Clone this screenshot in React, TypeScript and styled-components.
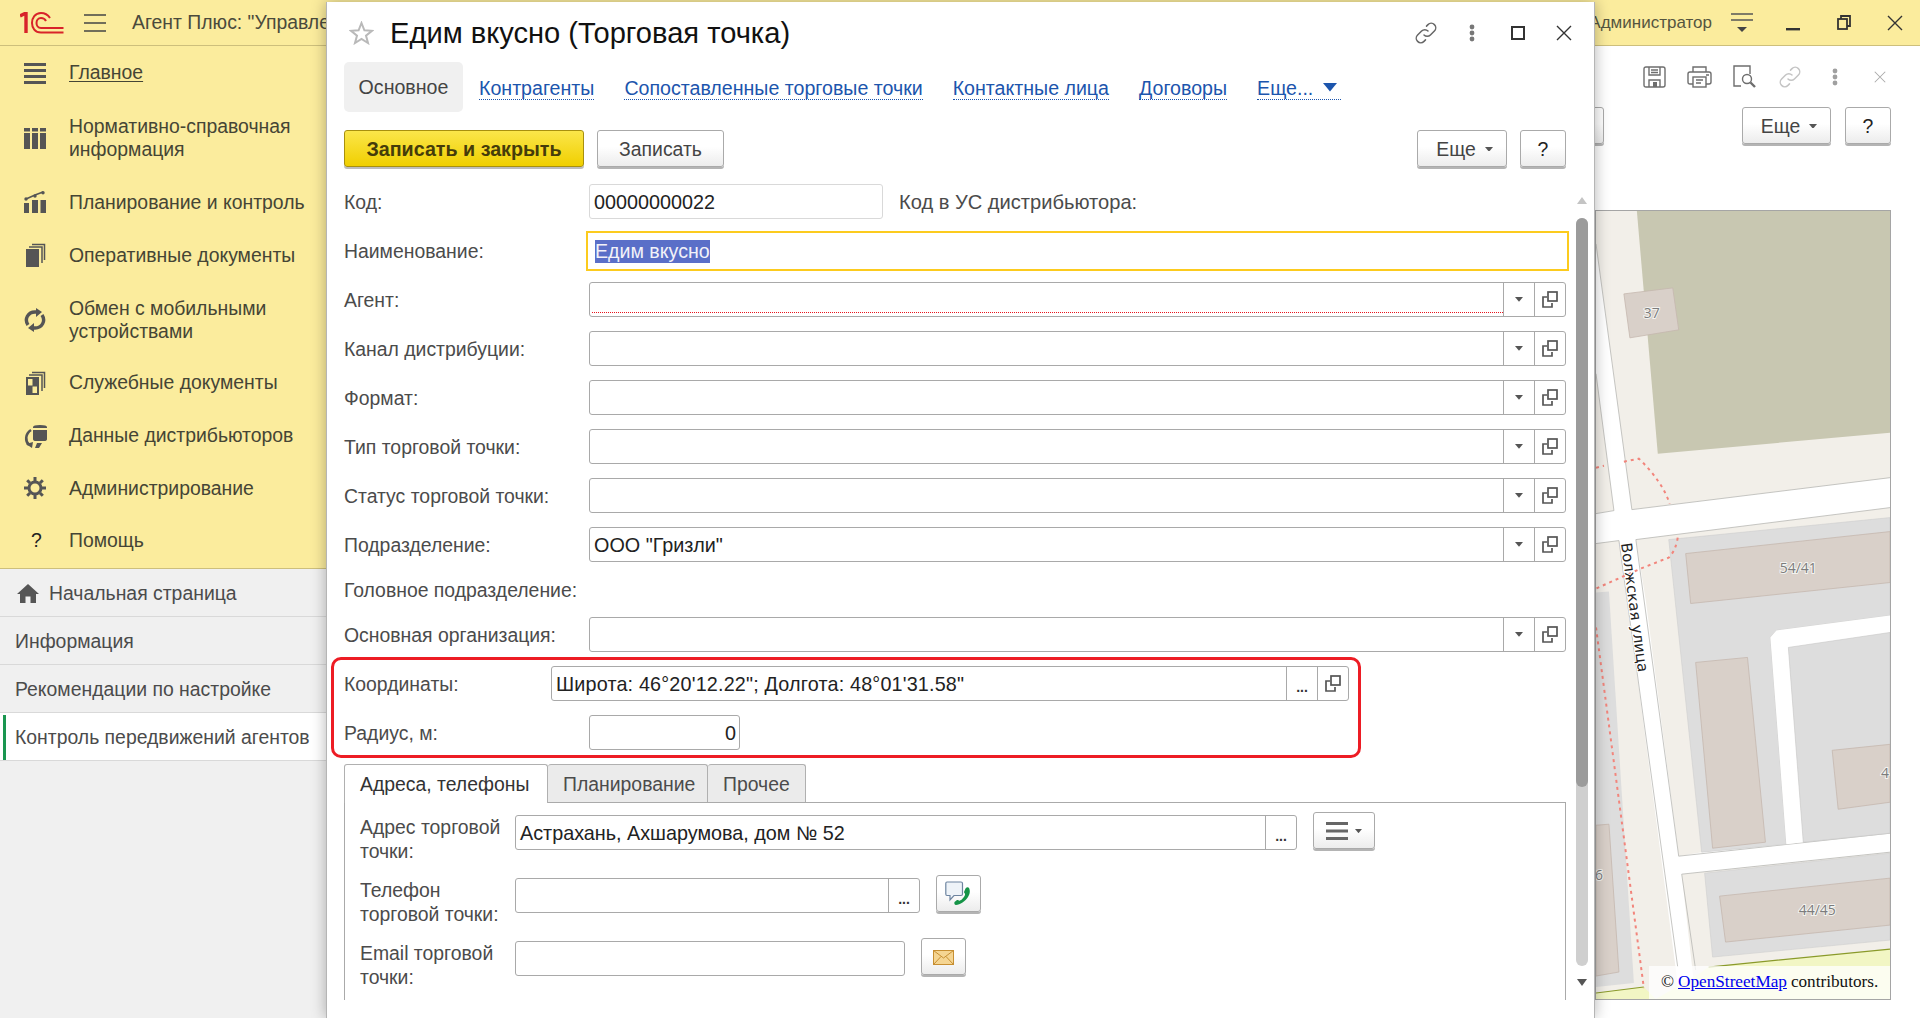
import React from 'react';
import styled, { createGlobalStyle } from 'styled-components';

const GlobalStyle = createGlobalStyle`
	html, body {
		margin: 0;
		padding: 0;
		background: #fff;
		font-family: 'Liberation Sans', Arial, sans-serif;
	}
	* {
		box-sizing: border-box;
	}
`;

const Desktop = styled.div`
	width: 1920px;
	height: 1018px;
	position: relative;
	overflow: hidden;
	display: flex;
	flex-direction: column;
	font-size: 19.4px;
	color: #4b4b4b;
`;

const TopBar = styled.header`
	height: 46px;
	flex: none;
	display: flex;
	align-items: center;
	background: #fbec9d;
	border-bottom: 1px solid #cdbf7c;
	padding-left: 20px;
`;

const BurgerSlot = styled.span`
	margin-left: 20px;
	display: flex;
`;

const AppTitle = styled.span`
	margin-left: 26px;
	white-space: nowrap;
	color: #4a4a3c;
`;

const TopBarRight = styled.div`
	margin-left: auto;
	display: flex;
	align-items: center;
`;

const UserName = styled.span`
	font-size: 17px;
	color: #55553f;
	margin-right: 4px;
`;

const WindowIcon = styled.span`
	width: 51px;
	display: flex;
	justify-content: center;
`;

const Workspace = styled.div`
	flex: 1;
	display: flex;
	min-height: 0;
`;

const Sidebar = styled.nav`
	width: 326px;
	flex: none;
	background: #f0f0f0;
	display: flex;
	flex-direction: column;
`;

const SectionPanel = styled.div`
	height: 523px;
	background: #fbec9d;
	border-bottom: 1px solid #cdbf7c;
`;

const SectionItem = styled.div<{ $height?: number; $shift?: boolean }>`
	height: ${(props) => props.$height ?? 53.4}px;
	display: flex;
	align-items: center;
	padding: ${(props) => (props.$shift ? '1px' : '0')} 0 0 24px;
	line-height: 23px;
	color: #454535;
`;

const SectionIcon = styled.span`
	width: 45px;
	flex: none;
	display: flex;
`;

const HelpMark = styled(SectionIcon)`
	padding-left: 7px;
	color: #222;
`;

const Underlined = styled.span`
	text-decoration: underline;
	text-underline-offset: 2px;
`;

const OpenWindow = styled.div<{ $active?: boolean; $home?: boolean }>`
	height: 48px;
	display: flex;
	align-items: center;
	gap: 10px;
	padding: 1px 0 0 ${(props) => (props.$home ? '17px' : '15px')};
	background: ${(props) => (props.$active ? '#fff' : 'transparent')};
	border-bottom: 1px solid #d9d9d9;
	position: relative;
	color: #4b4b4b;
	white-space: nowrap;

	&::before {
		content: ${(props) => (props.$active ? "''" : 'none')};
		position: absolute;
		left: 3px;
		top: 2px;
		bottom: 0;
		width: 3px;
		background: #1a9650;
	}
`;

const MainPane = styled.main`
	flex: 1;
	display: flex;
	flex-direction: column;
	align-items: stretch;
`;

const PrintToolbar = styled.div`
	height: 61px;
	flex: none;
	display: flex;
	justify-content: flex-end;
	align-items: center;
	padding: 0 18px 0 0;
`;

const ToolIcon = styled.span`
	width: 45px;
	display: flex;
	justify-content: center;
`;

const PaneActions = styled.div`
	height: 39px;
	flex: none;
	display: flex;
	align-items: flex-start;
	gap: 14px;
	padding-right: 29px;
`;

const Spacer = styled.span`
	flex: 1;
`;

const MapBox = styled.div`
	width: 296px;
	height: 790px;
	margin: 64px 29px 0 auto;
	flex: none;
	position: relative;
	overflow: hidden;
	border: 1px solid #a5a5a5;
	background: #f2efe9;
`;

const MapSvg = styled.svg`
	display: block;
	width: 100%;
	height: 100%;
`;

const Attribution = styled.div`
	position: absolute;
	left: 53px;
	right: 0;
	bottom: 0;
	height: 33px;
	display: flex;
	align-items: center;
	padding: 0 0 2px 12px;
	background: rgba(255, 255, 255, 0.75);
	font-family: 'Liberation Serif', 'Times New Roman', serif;
	font-size: 17.2px;
	color: #111;
	white-space: nowrap;

	a {
		color: #0000ee;
		text-decoration: underline;
		margin: 0 4px;
	}
`;

const Dialog = styled.section`
	position: absolute;
	left: 326px;
	top: 2px;
	width: 1269px;
	height: 1016px;
	display: flex;
	flex-direction: column;
	background: #fff;
	border-left: 1px solid #b5b5b5;
	border-right: 1px solid #b5b5b5;
	box-shadow: 0 0 14px rgba(0, 0, 0, 0.3);
	padding-left: 17px;
`;

const DialogHeader = styled.div`
	height: 60px;
	flex: none;
	display: flex;
	align-items: center;
	padding: 2px 0 0 5px;
`;

const DialogTitle = styled.h1`
	margin: 0 0 0 16px;
	font-size: 29.1px;
	font-weight: 400;
	color: #111;
	white-space: nowrap;
	flex: 1;
`;

const HeaderIcons = styled.div`
	display: flex;
	align-items: center;
	margin-right: 7px;
`;

const HeaderIcon = styled.span`
	width: 46px;
	display: flex;
	justify-content: center;
`;

const FormTabs = styled.div`
	height: 50px;
	flex: none;
	display: flex;
	align-items: center;
	font-size: 19.6px;
`;

const CurrentTab = styled.span`
	width: 119px;
	height: 50px;
	display: flex;
	align-items: center;
	justify-content: center;
	background: #f0f0f0;
	border-radius: 5px;
	color: #444;
`;

const TabLink = styled.a`
	margin: 2px 0 0 30px;
	display: inline-flex;
	align-items: center;
	color: #1c55ad;
	border-bottom: 1px dotted #1c55ad;
	line-height: 22px;

	&:first-of-type {
		margin-left: 16px;
	}
`;

const TabCaret = styled.span`
	margin-left: 10px;
	display: flex;
	padding-bottom: 0;
	padding-right: 4px;
`;

const ActionBar = styled.div`
	height: 39px;
	margin-top: 18px;
	flex: none;
	display: flex;
	gap: 13px;
	padding-right: 28px;
`;

const Button = styled.button<{ $width: number }>`
	width: ${(props) => props.$width}px;
	height: 37px;
	flex: none;
	display: inline-flex;
	align-items: center;
	justify-content: center;
	gap: 7px;
	padding: 1px 0 0;
	font: inherit;
	color: #444;
	background: linear-gradient(#ffffff 45%, #ececec);
	border: 1px solid #aaa;
	border-radius: 3px;
	box-shadow: 0 2px 0 #b4b4b4;
`;

const MoreButton = styled(Button)`
	padding-left: 5px;
	gap: 9px;
`;

const PrimaryButton = styled(Button)`
	font-weight: 700;
	font-size: 19.7px;
	color: #453c0a;
	background: linear-gradient(#fbe64a, #f0cf00);
	border-color: #a8900e;
	box-shadow: 0 2px 0 #bdbdbd;
`;

const HelpButton = styled(Button)`
	color: #222;
`;

const HiddenButton = styled(Button)`
	margin-right: 124px;
`;

const ScrollArea = styled.div`
	flex: 1;
	margin-top: 8px;
	min-height: 0;
	padding-right: 28px;
`;

const Row = styled.div<{ $height?: number }>`
	height: ${(props) => props.$height ?? 49}px;
	display: flex;
	align-items: center;
`;

const Label = styled.label<{ $width?: number }>`
	width: ${(props) => props.$width ?? 245}px;
	flex: none;
	padding-top: 2px;
	white-space: nowrap;
	color: #4b4b4b;
`;

const Field = styled.div<{ $width?: number; $muted?: boolean }>`
	${(props) => (props.$width ? `width: ${props.$width}px;` : 'flex: 1;')}
	height: 35px;
	flex-shrink: 0;
	display: flex;
	align-items: stretch;
	background: #fff;
	border: 1px solid ${(props) => (props.$muted ? '#d9d9d9' : '#a9a9a9')};
	border-radius: 3px;
	color: #222;
	font-size: 19.8px;
`;

const FieldValue = styled.span<{ $right?: boolean; $required?: boolean; $spread?: boolean }>`
	flex: 1;
	display: flex;
	align-items: center;
	justify-content: ${(props) => (props.$right ? 'flex-end' : 'flex-start')};
	padding: 2px 3px 0 4px;
	position: relative;
	white-space: nowrap;
	letter-spacing: ${(props) => (props.$spread ? '0.17px' : 'normal')};

	&::after {
		content: ${(props) => (props.$required ? "''" : 'none')};
		position: absolute;
		left: 2px;
		right: 0;
		bottom: 3px;
		border-bottom: 1px dotted #e8141c;
	}
`;

const FieldAction = styled.span`
	width: 31px;
	flex: none;
	display: flex;
	align-items: center;
	justify-content: center;
	border-left: 1px solid #a9a9a9;
	color: #333;
`;

const EllipsisAction = styled(FieldAction)`
	align-items: flex-end;
	padding-bottom: 6px;
	font-size: 14px;
	font-weight: 700;
	line-height: 14px;
`;

const FocusedField = styled.div`
	flex: 1;
	height: 40px;
	margin: 0 -3px;
	display: flex;
	align-items: center;
	padding: 1px 0 0 7px;
	border: 2px solid #fccb1e;
	font-size: 19.6px;
`;

const Selected = styled.span`
	height: 23px;
	line-height: 23px;
	background: #5a6fc8;
	color: #f2f2f8;
`;

const Inline = styled.span`
	margin-left: 16px;
	padding-top: 2px;
	font-size: 20.1px;
	white-space: nowrap;
	color: #4b4b4b;
`;

const Highlight = styled.div`
	position: absolute;
	left: 331px;
	top: 657px;
	width: 1030px;
	height: 101px;
	border: 3px solid #ed1c24;
	border-radius: 10px;
	pointer-events: none;
`;

const TabStrip = styled.div`
	margin-top: 7px;
	height: 39px;
	display: flex;
	border-bottom: 1px solid #aaa;
`;

const PanelTab = styled.span<{ $active?: boolean; $width: number }>`
	width: ${(props) => props.$width}px;
	height: ${(props) => (props.$active ? '39px' : '38px')};
	display: flex;
	align-items: center;
	padding: 1px 0 0 15px;
	background: ${(props) => (props.$active ? '#fff' : '#ebebeb')};
	border: 1px solid #b0b0b0;
	border-bottom: ${(props) => (props.$active ? 'none' : '0')};
	border-left-width: ${(props) => (props.$active ? '1px' : '0')};
	border-radius: 3px 3px 0 0;
	color: ${(props) => (props.$active ? '#333' : '#4b4b4b')};
`;

const TabPanel = styled.div`
	height: 197px;
	padding: 12px 0 0 15px;
	border-left: 1px solid #aaa;
	border-right: 1px solid #aaa;
`;

const ContactRow = styled.div`
	height: 48px;
	margin-bottom: 15px;
	display: flex;
	align-items: flex-start;
`;

const ContactLabel = styled.label`
	width: 155px;
	flex: none;
	line-height: 24px;
	color: #4b4b4b;
	white-space: nowrap;
`;

const SideButton = styled(Button)`
	margin: -3px 0 0 16px;
`;

const Track = styled.div`
	position: absolute;
	left: 1576px;
	top: 218px;
	width: 12px;
	height: 748px;
	background: #cfcfcf;
	border-radius: 6px;
`;

const Thumb = styled.div`
	height: 569px;
	background: #9b9b9b;
	border-radius: 6px;
`;

const ScrollArrow = styled.svg<{ $top: number }>`
	position: absolute;
	left: 1577px;
	top: ${(props) => props.$top}px;
`;

const Logo = () => (
	<svg width="44" height="22" viewBox="0 0 44 22" fill="none" stroke="#d8232a">
		<path d="M0 4 L6 1 V21" strokeWidth="3.4" />
		<path d="M30 6 C28 3 25 1 21 1 C15 1 12 6 12 11 C12 16 15 20.5 21 20.5 H43.5" strokeWidth="2" />
		<path d="M26 9 C25 7 23 6 21 6 C18 6 16.5 8.5 16.5 11 C16.5 13.5 18 16 21 16 H43.5" strokeWidth="2" />
	</svg>
);

const Burger = ({ color = '#444' }: { color?: string }) => (
	<svg width="22" height="18" viewBox="0 0 22 18" stroke={color} strokeWidth="1.4">
		<path d="M0 1 H22 M0 9 H22 M0 17 H22" />
	</svg>
);

const Caret = ({ color = '#555', size = 8 }: { color?: string; size?: number }) => (
	<svg width={size} height={size * 0.6} viewBox="0 0 10 6" fill={color}>
		<path d="M0 0 H10 L5 6 Z" />
	</svg>
);

const OpenIcon = () => (
	<svg width="16" height="17" viewBox="0 0 16 17" fill="none" stroke="#555" strokeWidth="1.7">
		<rect x="6" y="1" width="9" height="9" />
		<path d="M5 6 H1 V16 H10 V12" />
	</svg>
);

const LinkIcon = ({ color = '#666' }: { color?: string }) => (
	<svg width="24" height="24" viewBox="0 0 24 24" fill="none" stroke={color} strokeWidth="1.5" strokeLinecap="round">
		<path d="M10 14 a4.5 4.5 0 0 0 6.4 0 l4 -4 a4.5 4.5 0 0 0 -6.4 -6.4 l-1.5 1.5" />
		<path d="M14 10 a4.5 4.5 0 0 0 -6.4 0 l-4 4 a4.5 4.5 0 0 0 6.4 6.4 l1.5 -1.5" />
	</svg>
);

const DotsIcon = ({ color = '#777' }: { color?: string }) => (
	<svg width="6" height="18" viewBox="0 0 6 18" fill={color}>
		<circle cx="3" cy="3" r="2.4" />
		<circle cx="3" cy="9" r="2.4" />
		<circle cx="3" cy="15" r="2.4" />
	</svg>
);

const CloseIcon = ({ size = 16, color = '#333', width = 1.4 }: { size?: number; color?: string; width?: number }) => (
	<svg width={size} height={size} viewBox="0 0 16 16" stroke={color} strokeWidth={width}>
		<path d="M1 1 L15 15 M15 1 L1 15" />
	</svg>
);

const StarIcon = () => (
	<svg width="25" height="24" viewBox="0 0 25 24" fill="none" stroke="#b9b9b9" strokeWidth="2">
		<path d="M12.5 2 L15.4 9.3 L23 9.8 L17 14.6 L19 22 L12.5 18 L6 22 L8 14.6 L2 9.8 L9.6 9.3 Z" />
	</svg>
);

const SaveIcon = () => (
	<svg width="23" height="22" viewBox="0 0 23 22" fill="none" stroke="#6e6e6e" strokeWidth="1.4">
		<path d="M3 1 H20 Q22 1 22 3 V19 Q22 21 20 21 H3 Q1 21 1 19 V3 Q1 1 3 1 Z" />
		<path d="M6 1 V9 H17 V1 M8 4 H15 M8 6.5 H15" />
		<path d="M6 21 V14 H17 V21" />
		<rect x="10" y="16" width="4" height="5" fill="#6e6e6e" stroke="none" />
	</svg>
);

const PrintIcon = () => (
	<svg width="25" height="22" viewBox="0 0 25 22" fill="none" stroke="#6e6e6e" strokeWidth="1.4">
		<path d="M6 6 V1 H19 V6" />
		<path d="M6 18 H3 Q1 18 1 16 V8 Q1 6 3 6 H22 Q24 6 24 8 V16 Q24 18 22 18 H19" />
		<rect x="6" y="11" width="13" height="10" />
		<path d="M9 14 H16 M9 17 H14 M19 9 H22" />
	</svg>
);

const PreviewIcon = () => (
	<svg width="23" height="23" viewBox="0 0 23 23" fill="none" stroke="#6e6e6e" strokeWidth="1.4">
		<path d="M17 9 V1 H1 V21 H8" />
		<circle cx="14" cy="14" r="4.5" />
		<path d="M17.5 17.5 L22 22" strokeWidth="2.4" />
	</svg>
);

const HomeIcon = () => (
	<svg width="22" height="19" viewBox="0 0 22 19" fill="#555">
		<path d="M11 0 L22 10 H19 V19 H13.5 V12.5 H8.5 V19 H3 V10 H0 Z" />
	</svg>
);

const sectionIcons = {
	main: (
		<svg width="22" height="22" viewBox="0 0 22 22" fill="#555">
			<path d="M0 1 H22 V4 H0 Z M0 7 H22 V10 H0 Z M0 13 H22 V16 H0 Z M0 19 H22 V22 H0 Z" />
		</svg>
	),
	catalog: (
		<svg width="22" height="22" viewBox="0 0 22 22" fill="#555">
			<path d="M0 1 H6 V4.5 H0 Z M8 1 H14 V4.5 H8 Z M16 1 H22 V4.5 H16 Z M0 6 H6 V22 H0 Z M8 6 H14 V22 H8 Z M16 6 H22 V22 H16 Z" />
		</svg>
	),
	plan: (
		<svg width="22" height="22" viewBox="0 0 22 22" fill="#555">
			<path d="M0 12 H5 V22 H0 Z M8 9 H14 V22 H8 Z M16.5 9 H22 V22 H16.5 Z" />
			<path d="M2 8 L11 4 L19 1" stroke="#555" strokeWidth="1.6" fill="none" />
			<circle cx="2" cy="8" r="1.7" />
			<circle cx="11" cy="5" r="1.7" />
			<circle cx="19" cy="1.8" r="1.7" />
		</svg>
	),
	docs: (
		<svg width="22" height="24" viewBox="0 0 22 24" fill="#555">
			<path d="M2 6 H15 V24 H2 Z" />
			<path d="M5 4 H18 V20 M8 1.5 H20.5 V17" fill="none" stroke="#555" strokeWidth="1.5" />
		</svg>
	),
	sync: (
		<svg width="22" height="24" viewBox="0 0 22 24" fill="none" stroke="#555" strokeWidth="3.4">
			<path d="M4 17 C0 11 4 4 11 4 L14 4" />
			<path d="M18 7 C22 13 18 20 11 20 L8 20" />
			<path d="M12 0 L18 4 L12 9 Z M10 15 L4 20 L10 24 Z" fill="#555" stroke="none" />
		</svg>
	),
	service: (
		<svg width="22" height="24" viewBox="0 0 22 24" fill="#555">
			<path fillRule="evenodd" d="M2 6 H15 V24 H2 Z M8.5 8 H4 V14.5 H8.5 Z M13 15.5 H8.5 V22 H13 Z" />
			<path d="M5 4 H18 V20 M8 1.5 H20.5 V17" fill="none" stroke="#555" strokeWidth="1.5" />
		</svg>
	),
	distributor: (
		<svg width="24" height="24" viewBox="0 0 24 24" fill="#555">
			<path d="M9 3 Q9 1 16 1 Q23 1 23 3 V4 H9 Z M9 6 H23 V15 Q23 17 20 17 H12 Q9 17 9 15 Z" />
			<path d="M7 6 C1 10 1 17 5 21" fill="none" stroke="#555" strokeWidth="2.6" />
			<path d="M13 19 H18 L15 24 H11 Z M2 20 L9 18 L8 24 Z" />
		</svg>
	),
	admin: (
		<svg width="22" height="22" viewBox="0 0 22 22" fill="none" stroke="#555">
			<circle cx="11" cy="11" r="6" strokeWidth="3" />
			<path
				d="M11 0 V4 M11 18 V22 M0 11 H4 M18 11 H22 M3.2 3.2 L6 6 M16 16 L18.8 18.8 M18.8 3.2 L16 6 M6 16 L3.2 18.8"
				strokeWidth="3"
			/>
		</svg>
	),
};

const PhoneChat = () => (
	<svg width="27" height="27" viewBox="0 0 27 27" fill="none">
		<path d="M2 1 H16 Q17.5 1 17.5 2.5 V13 Q17.5 14.5 16 14.5 H9 L5 19 V14.5 H2 Q0.8 14.5 0.8 13 V2.5 Q0.8 1 2 1 Z" fill="#eef3f8" stroke="#6d84a0" strokeWidth="1.2" />
		<path d="M24 7 C25 9 25.5 12 23 16 C20.5 20 15 24 11 24 C9.5 24 9 22 9.5 21 L12 19 C13 18.6 14 20 15 19.6 C17 18.6 19 16.5 20 14 C20.5 12.6 19 12 19 11 L20.5 7.5 C21.5 6.2 23.4 6 24 7 Z" fill="#159447" />
	</svg>
);

const MailIcon = () => (
	<svg width="21" height="15" viewBox="0 0 21 15">
		<rect x="0.5" y="0.5" width="20" height="14" fill="#f5d592" stroke="#c78f32" />
		<path d="M0.5 0.5 L10.5 8 L20.5 0.5 M0.5 14.5 L8 6.5 M20.5 14.5 L13 6.5" fill="none" stroke="#c78f32" />
	</svg>
);

const MenuGlyph = () => (
	<svg width="22" height="18" viewBox="0 0 22 18" fill="#666">
		<path d="M0 0 H22 V3 H0 Z M0 7.5 H22 V10.5 H0 Z M0 15 H22 V18 H0 Z" />
	</svg>
);

const MapLabels = styled.g`
	paint-order: stroke;
	font-family: 'Open Sans', sans-serif;
	font-size: 14px;
	fill: #7c7c7c;
	stroke: #f3f3f0;
	stroke-width: 2px;
	text-anchor: middle;
`;

const StreetName = styled.text`
	paint-order: stroke;
	font-family: 'DejaVu Sans', sans-serif;
	font-size: 15px;
	fill: #222;
	stroke: #fff;
	stroke-width: 2px;
`;

const MapDrawing = () => (
	<MapSvg viewBox="0 0 295 789" preserveAspectRatio="none">
		<rect width="295" height="789" fill="#f2efe9" />
		<polygon points="41,0 295,0 295,222 62,243" fill="#c8c7b1" />
		<polygon points="28,83 77,77 83,119 34,127" fill="#d9d0c9" stroke="#c5b8ae" strokeWidth="0.8" />
		<polygon points="0,33 36,299 295,267 295,297 40,329 50,390 83,646 106,642 208,632 295,623 295,642 86,664 100,789 84,789 34,410 23,330 0,333 0,303 18,300 0,163" fill="#fff" />
		<path d="M0 33 L36 299 L295 267 M295 297 L40 329 L83 646 M18 300 L0 163 M0 303 L18 300 M0 333 L23 330 L82 757 M86 664 L100 760 M83 646 L295 623 M86 664 L295 642" fill="none" stroke="#b8b8b4" strokeWidth="0.8" />
		<polygon points="73,329 295,307 295,405 181,420 175,427 191,634 106,642" fill="#dddddd" stroke="#cfcfcf" strokeWidth="0.6" />
		<polygon points="90,343 295,321 295,372 95,393" fill="#d9d0c9" stroke="#c5b8ae" strokeWidth="0.8" />
		<polygon points="100,452 152,447 170,632 117,638" fill="#d9d0c9" stroke="#c5b8ae" strokeWidth="0.8" />
		<polygon points="181,420 295,405 295,422 193,437 208,632 191,634 175,427" fill="#fff" />
		<polygon points="193,437 295,422 295,623 208,632" fill="#dddddd" stroke="#c8c8c8" strokeWidth="0.6" />
		<polygon points="237,540 295,534 295,592 243,599" fill="#d9d0c9" stroke="#c5b8ae" strokeWidth="0.8" />
		<polygon points="109,663 295,643 295,730 117,747" fill="#dddddd" stroke="#cfcfcf" strokeWidth="0.6" />
		<polygon points="124,686 295,668 295,715 130,732" fill="#d9d0c9" stroke="#c5b8ae" strokeWidth="0.8" />
		<polygon points="0,382 13,381 38,773 0,777" fill="#dddddd" />
		<polygon points="0,615 13,614 23,762 0,766" fill="#d9d0c9" stroke="#c5b8ae" strokeWidth="0.8" />
		<polygon points="113,757 295,739 295,789 0,789 0,783 48,777 60,789 100,766" fill="#f2f6c4" />
		<path d="M113 757 L295 739 M0 783 L48 777" stroke="#8a9a2a" strokeWidth="1.2" fill="none" />
		<g fill="none" stroke="#f2857c" strokeWidth="2" strokeDasharray="3 4">
			<path d="M0 257 L8 255 M28 251 L43 248 Q66 270 74 293" />
			<path d="M82 327 Q80 340 73 347 L45 358 L0 378" />
			<path d="M0 417 L48 778" />
		</g>
		<MapLabels>
			<text x="56" y="107">37</text>
			<text x="203" y="362">54/41</text>
			<text x="222" y="705">44/45</text>
			<text x="290" y="568">4</text>
			<text x="3" y="670">6</text>
		</MapLabels>
		<StreetName transform="translate(25 333) rotate(82.4)">Волжская улица</StreetName>
	</MapSvg>
);

const App = () => {
	const plainRows = ['Агент:', 'Канал дистрибуции:', 'Формат:', 'Тип торговой точки:', 'Статус торговой точки:'];

	return (
		<Desktop>
			<GlobalStyle />
			<TopBar>
				<Logo />
				<BurgerSlot>
					<Burger />
				</BurgerSlot>
				<AppTitle>Агент Плюс: "Управле</AppTitle>
				<TopBarRight>
					<UserName>Администратор</UserName>
					<WindowIcon>
						<svg width="22" height="20" viewBox="0 0 22 20" stroke="#555" strokeWidth="1.3" fill="#444">
							<path d="M0 1 H22 M0 7 H22" />
							<path d="M6 14 H16 L11 19 Z" stroke="none" />
						</svg>
					</WindowIcon>
					<WindowIcon>
						<svg width="14" height="16" viewBox="0 0 14 16" fill="#333">
							<rect y="13" width="14" height="2.4" />
						</svg>
					</WindowIcon>
					<WindowIcon>
						<svg width="14" height="15" viewBox="0 0 14 15" fill="none" stroke="#333" strokeWidth="1.8">
							<rect x="1" y="4" width="9" height="10" />
							<path d="M4 4 V1 H13 V11 H10" />
						</svg>
					</WindowIcon>
					<WindowIcon>
						<CloseIcon />
					</WindowIcon>
				</TopBarRight>
			</TopBar>

			<Workspace>
				<Sidebar>
					<SectionPanel>
						<SectionItem>
							<SectionIcon>{sectionIcons.main}</SectionIcon>
							<Underlined>Главное</Underlined>
						</SectionItem>
						<SectionItem $height={76} $shift>
							<SectionIcon>{sectionIcons.catalog}</SectionIcon>
							<span>
								Нормативно-справочная
								<br />
								информация
							</span>
						</SectionItem>
						<SectionItem>
							<SectionIcon>{sectionIcons.plan}</SectionIcon>
							Планирование и контроль
						</SectionItem>
						<SectionItem>
							<SectionIcon>{sectionIcons.docs}</SectionIcon>
							Оперативные документы
						</SectionItem>
						<SectionItem $height={74} $shift>
							<SectionIcon>{sectionIcons.sync}</SectionIcon>
							<span>
								Обмен с мобильными
								<br />
								устройствами
							</span>
						</SectionItem>
						<SectionItem>
							<SectionIcon>{sectionIcons.service}</SectionIcon>
							Служебные документы
						</SectionItem>
						<SectionItem $height={52.4}>
							<SectionIcon>{sectionIcons.distributor}</SectionIcon>
							Данные дистрибьюторов
						</SectionItem>
						<SectionItem $height={52.4}>
							<SectionIcon>{sectionIcons.admin}</SectionIcon>
							Администрирование
						</SectionItem>
						<SectionItem $height={53}>
							<HelpMark>?</HelpMark>
							Помощь
						</SectionItem>
					</SectionPanel>
					<OpenWindow $home>
						<HomeIcon />
						Начальная страница
					</OpenWindow>
					<OpenWindow>Информация</OpenWindow>
					<OpenWindow>Рекомендации по настройке</OpenWindow>
					<OpenWindow $active>Контроль передвижений агентов</OpenWindow>
				</Sidebar>

				<MainPane>
					<PrintToolbar>
						<ToolIcon>
							<SaveIcon />
						</ToolIcon>
						<ToolIcon>
							<PrintIcon />
						</ToolIcon>
						<ToolIcon>
							<PreviewIcon />
						</ToolIcon>
						<ToolIcon>
							<LinkIcon color="#c4c4c4" />
						</ToolIcon>
						<ToolIcon>
							<DotsIcon color="#a0a0a0" />
						</ToolIcon>
						<ToolIcon>
							<CloseIcon size={12} color="#aaa" />
						</ToolIcon>
					</PrintToolbar>
					<PaneActions>
						<Spacer />
						<HiddenButton $width={100} />
						<MoreButton $width={89}>
							Еще <Caret />
						</MoreButton>
						<HelpButton $width={46}>?</HelpButton>
					</PaneActions>
					<MapBox>
						<MapDrawing />
						<Attribution>
							© <a>OpenStreetMap</a> contributors.
						</Attribution>
					</MapBox>
				</MainPane>
			</Workspace>

			<Dialog>
				<DialogHeader>
					<StarIcon />
					<DialogTitle>Едим вкусно (Торговая точка)</DialogTitle>
					<HeaderIcons>
						<HeaderIcon>
							<LinkIcon />
						</HeaderIcon>
						<HeaderIcon>
							<DotsIcon />
						</HeaderIcon>
						<HeaderIcon>
							<svg width="14" height="14" viewBox="0 0 14 14" fill="none" stroke="#333" strokeWidth="2">
								<rect x="1" y="1" width="12" height="12" />
							</svg>
						</HeaderIcon>
						<HeaderIcon>
							<CloseIcon />
						</HeaderIcon>
					</HeaderIcons>
				</DialogHeader>

				<FormTabs>
					<CurrentTab>Основное</CurrentTab>
					<TabLink>Контрагенты</TabLink>
					<TabLink>Сопоставленные торговые точки</TabLink>
					<TabLink>Контактные лица</TabLink>
					<TabLink>Договоры</TabLink>
					<TabLink>
						Еще...
						<TabCaret>
							<Caret color="#1c55ad" size={14} />
						</TabCaret>
					</TabLink>
				</FormTabs>

				<ActionBar>
					<PrimaryButton $width={240}>Записать и закрыть</PrimaryButton>
					<Button $width={127}>Записать</Button>
					<Spacer />
					<MoreButton $width={90}>
						Еще <Caret />
					</MoreButton>
					<HelpButton $width={46}>?</HelpButton>
				</ActionBar>

				<ScrollArea>
					<Row>
						<Label>Код:</Label>
						<Field $width={294} $muted>
							<FieldValue>00000000022</FieldValue>
						</Field>
						<Inline>Код в УС дистрибьютора:</Inline>
					</Row>
					<Row>
						<Label>Наименование:</Label>
						<FocusedField>
							<Selected>Едим вкусно</Selected>
						</FocusedField>
					</Row>
					{plainRows.map((label, index) => (
						<Row key={label}>
							<Label>{label}</Label>
							<Field>
								<FieldValue $required={index === 0} />
								<FieldAction>
									<Caret />
								</FieldAction>
								<FieldAction>
									<OpenIcon />
								</FieldAction>
							</Field>
						</Row>
					))}
					<Row>
						<Label>Подразделение:</Label>
						<Field>
							<FieldValue>ООО "Гризли"</FieldValue>
							<FieldAction>
								<Caret />
							</FieldAction>
							<FieldAction>
								<OpenIcon />
							</FieldAction>
						</Field>
					</Row>
					<Row $height={41}>
						<Label>Головное подразделение:</Label>
					</Row>
					<Row>
						<Label>Основная организация:</Label>
						<Field>
							<FieldValue />
							<FieldAction>
								<Caret />
							</FieldAction>
							<FieldAction>
								<OpenIcon />
							</FieldAction>
						</Field>
					</Row>
					<Row>
						<Label $width={207}>Координаты:</Label>
						<Field $width={798}>
							<FieldValue $spread>Широта: 46°20'12.22"; Долгота: 48°01'31.58"</FieldValue>
							<EllipsisAction>...</EllipsisAction>
							<FieldAction>
								<OpenIcon />
							</FieldAction>
						</Field>
					</Row>
					<Row>
						<Label>Радиус, м:</Label>
						<Field $width={151}>
							<FieldValue $right>0</FieldValue>
						</Field>
					</Row>

					<TabStrip>
						<PanelTab $active $width={204}>
							Адреса, телефоны
						</PanelTab>
						<PanelTab $width={160}>Планирование</PanelTab>
						<PanelTab $width={98}>Прочее</PanelTab>
					</TabStrip>
					<TabPanel>
						<ContactRow>
							<ContactLabel>
								Адрес торговой
								<br />
								точки:
							</ContactLabel>
							<Field $width={782}>
								<FieldValue>Астрахань, Ахшарумова, дом № 52</FieldValue>
								<EllipsisAction>...</EllipsisAction>
							</Field>
							<SideButton $width={62}>
								<MenuGlyph />
								<Caret size={7} />
							</SideButton>
						</ContactRow>
						<ContactRow>
							<ContactLabel>
								Телефон
								<br />
								торговой точки:
							</ContactLabel>
							<Field $width={405}>
								<FieldValue />
								<EllipsisAction>...</EllipsisAction>
							</Field>
							<SideButton $width={45}>
								<PhoneChat />
							</SideButton>
						</ContactRow>
						<ContactRow>
							<ContactLabel>
								Email торговой
								<br />
								точки:
							</ContactLabel>
							<Field $width={390}>
								<FieldValue />
							</Field>
							<SideButton $width={45}>
								<MailIcon />
							</SideButton>
						</ContactRow>
					</TabPanel>
				</ScrollArea>
			</Dialog>

			<Highlight />
			<ScrollArrow $top={197} width="10" height="7" viewBox="0 0 10 7" fill="#c4c4c4">
				<path d="M0 7 H10 L5 0 Z" />
			</ScrollArrow>
			<Track>
				<Thumb />
			</Track>
			<ScrollArrow $top={979} width="10" height="7" viewBox="0 0 10 7" fill="#555">
				<path d="M0 0 H10 L5 7 Z" />
			</ScrollArrow>
		</Desktop>
	);
};

export default App;
